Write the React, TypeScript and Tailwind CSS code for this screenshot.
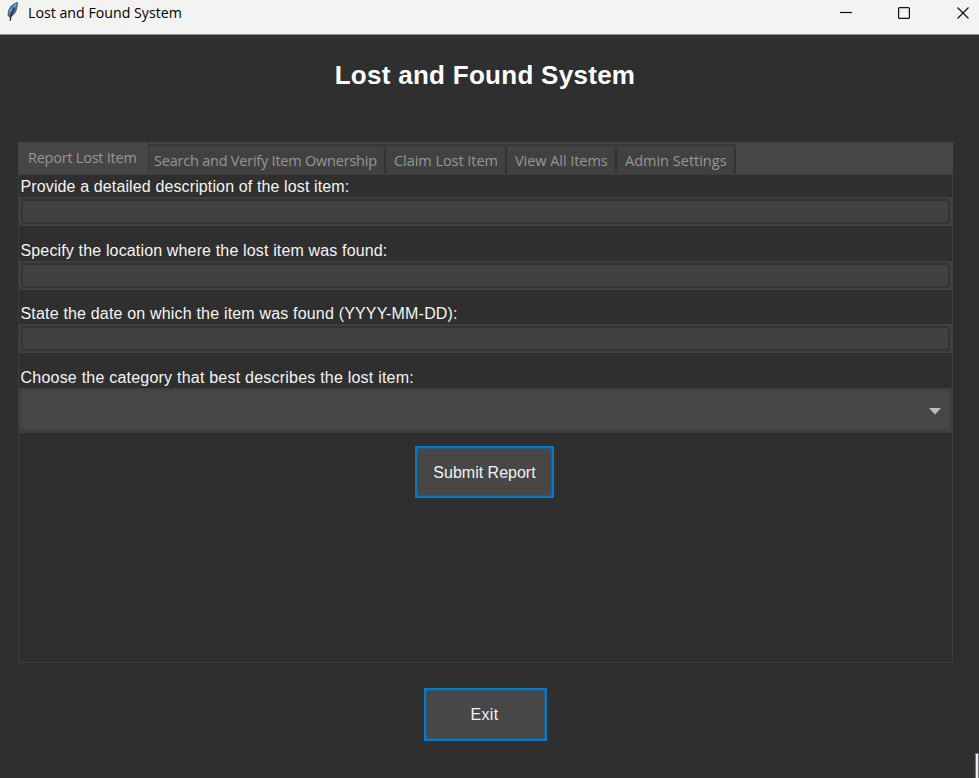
import React from "react";

const tabs = [
  { label: "Search and Verify Item Ownership", box: "w-[237px] pl-[5px]", text: "tracking-[-0.22px]" },
  { label: "Claim Lost Item", box: "w-[121px] pl-2", text: "tracking-[-0.05px]" },
  { label: "View All Items", box: "w-[110px] pl-2", text: "tracking-[-0.05px]" },
  { label: "Admin Settings", box: "w-[119px] pl-2", text: "" },
];

const fields = [
  { label: "Provide a detailed description of the lost item:", block: "h-16", text: "h-[22px] leading-6 tracking-[0.125px]" },
  { label: "Specify the location where the lost item was found:", block: "h-16", text: "h-[22px] leading-6 tracking-[0.15px]" },
  { label: "State the date on which the item was found (YYYY-MM-DD):", block: "h-[63px]", text: "h-[21px] leading-[22px] tracking-[0.18px]" },
];

function Feather() {
  return (
    <svg width="14" height="22" viewBox="0 0 14 22" className="shrink-0">
      <path d="M12 2C6.500 2.800 1.400 8 1.600 15.500l2 2.200c3.900-1.800 7.200-5 7.700-10.200.2-2 1-3.900.7-5.500Z" fill="#59616d" />
      <path d="M11 3C6.800 4.800 2.800 9.500 2.700 14.800 6.500 13.500 9.800 10.300 10.300 6Z" fill="#3b7fcb" />
      <path d="M10.200 4 7.500 7M6 8 4 12" stroke="#79a9df" strokeWidth="1.300" />
      <path d="M8.300 8C6.200 11 5 14 4.200 20.800" stroke="#1c2026" strokeWidth="1.200" fill="none" />
    </svg>
  );
}

function TitleBar() {
  return (
    <header className="flex h-[35px] items-start border-b border-[#8b908c] bg-[#f3f3f2] pl-[6px] text-black">
      <Feather />
      <span className="ml-2 mt-[3px] grow whitespace-nowrap font-['Open_Sans',sans-serif] text-[14.200px] leading-5">
        Lost and Found System
      </span>
      <svg width="140" height="30" viewBox="839 0 140 30" fill="none" stroke="#111" strokeWidth="1.200">
        <path d="M840 12.500h12" />
        <rect x="898.600" y="7.600" width="10.800" height="10.800" rx="1" />
        <path d="m957.500 7.500 11 11m0-11-11 11" />
      </svg>
    </header>
  );
}

function ActionButton({ label, size, inner }: { label: string; size: string; inner: string }) {
  return (
    <button className={`${size} border-2 border-[#0878c8] bg-[#006bb5] text-[16px] text-[#f2f2f2]`}>
      <span className={`${inner} flex h-full w-full items-center justify-center rounded-[3px] border border-[#2c5878] bg-[#474747]`}>
        {label}
      </span>
    </button>
  );
}

export default function App() {
  return (
    <div className="relative h-[778px] w-[979px] overflow-hidden bg-[#2f2f2f] font-['Liberation_Sans',Arial,sans-serif] text-[#f5f5f5]">
      <TitleBar />
      <main className="flex flex-col items-center pl-[18px] pr-[26px]">
        <h1 className="mt-6 h-[83px] whitespace-nowrap pr-px text-[26px] font-bold leading-[32px] tracking-[0.28px] text-white">
          Lost and Found System
        </h1>
        <section className="flex h-[521px] w-full flex-col">
          <nav className="flex h-8 items-end bg-[#464646] font-['Open_Sans',sans-serif] text-[14.500px] leading-5 text-[#969696]">
            <div className="flex h-8 w-[131px] items-center border-r border-[#383838] pl-[10px]">
              <span className="whitespace-nowrap tracking-[-0.24px]">Report Lost Item</span>
            </div>
            <div className="flex h-[30px] border-t-2 border-[#383838]">
              {tabs.map((tab) => (
                <div key={tab.label} className={`${tab.box} h-7 rounded-tr-[3px] border-r-2 border-[#333333] bg-[#414141] pt-[5px]`}>
                  <span className={`${tab.text} block whitespace-nowrap`}>{tab.label}</span>
                </div>
              ))}
            </div>
          </nav>
          <form className="flex grow flex-col border border-[#3c3c3c] text-[16px]">
            {fields.map((field) => (
              <label key={field.label} className={`${field.block} block`}>
                <span className={`${field.text} block whitespace-nowrap pl-[1.500px]`}>{field.label}</span>
                <span className="flex h-[29px] border border-[#414141] bg-[#3d3d3d] p-[1px]">
                  <span className="grow rounded-[4px] border-2 border-[#343434] bg-[#414141]" />
                </span>
              </label>
            ))}
            <label className="block">
              <span className="block h-[22px] whitespace-nowrap pl-[1.500px] leading-6 tracking-[0.22px]">
                Choose the category that best describes the lost item:
              </span>
              <span className="flex h-[45px] border border-[#3d3d3d] bg-[#414141] p-[1px]">
                <span className="flex grow items-center justify-end rounded-[3px] border border-[#424242] border-b-[#383838] bg-[#464646] pr-2 pt-[2px]">
                  <svg width="12" height="7" viewBox="0 0 12 7">
                    <path d="M0 0h12L6 6.500Z" fill="#bdbdbd" />
                  </svg>
                </span>
              </span>
            </label>
            <div className="mt-[13px] flex justify-center pr-[2px]">
              <ActionButton label="Submit Report" size="h-[52px] w-[139px]" inner="pt-[2px]" />
            </div>
          </form>
        </section>
        <div className="mt-[25px] flex">
          <ActionButton label="Exit" size="h-[53px] w-[123px]" inner="pr-[2px] tracking-[0.3px]" />
        </div>
      </main>
      <div className="absolute bottom-0 right-0 h-[25px] w-[4px] border border-b-0 border-[#77757a] bg-[#f1eef2]" />
    </div>
  );
}
